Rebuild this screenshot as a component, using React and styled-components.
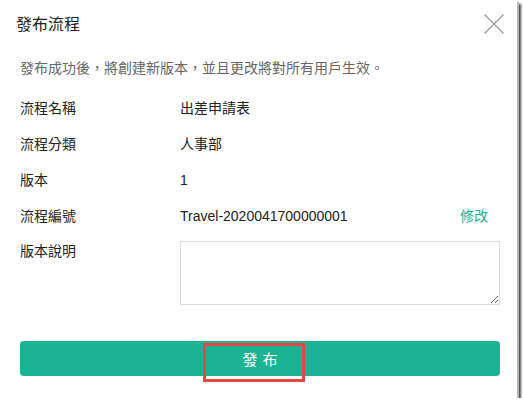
import React from "react";
import styled, { createGlobalStyle } from "styled-components";

const GlobalStyle = createGlobalStyle`
  html, body {
    margin: 0;
    padding: 0;
    background: #ffffff;
  }
  body {
    font-family: "Liberation Sans", "Noto Sans CJK TC", sans-serif;
    color: #333;
  }
`;

const Dialog = styled.div`
  width: 517px;
  height: 398px;
  box-sizing: border-box;
  background: #fff;
  box-shadow: 2px 2px 0 #b5b5b5, 4px 4px 2px #4a4a4a;
  display: flex;
  flex-direction: column;
`;

const Header = styled.div`
  height: 49px;
  display: flex;
  align-items: center;
  justify-content: space-between;
  padding: 0 13px 0 16px;
`;

const Title = styled.span`
  font-size: 16px;
  color: #222;
  line-height: 20px;
`;

const CloseButton = styled.button`
  width: 20px;
  height: 20px;
  padding: 0;
  border: none;
  background: none;
  display: flex;
  margin-top: -2px;
  cursor: pointer;
`;

const Body = styled.div`
  padding: 9px 17px 0 20px;
  display: flex;
  flex-direction: column;
`;

const Description = styled.p`
  margin: 0 0 12px;
  font-size: 14px;
  line-height: 20px;
  color: #666;
`;

const Row = styled.div`
  display: flex;
  align-items: ${(p) => (p.$top ? "flex-start" : "center")};
  height: ${(p) => (p.$top ? "auto" : "36px")};
  margin-top: ${(p) => (p.$top ? "7px" : "0")};
  font-size: 14px;
  line-height: 20px;
`;

const Label = styled.div`
  width: 160px;
  flex-shrink: 0;
  color: #222;
`;

const Value = styled.div`
  flex: 1;
  color: #222;
`;

const EditLink = styled.a`
  color: #1ab394;
  margin-right: 12px;
  cursor: pointer;
`;

const NoteInput = styled.textarea`
  width: 320px;
  height: 64px;
  box-sizing: border-box;
  border: 1px solid #dcdcdc;
  border-radius: 0;
  resize: vertical;
  font-family: inherit;
  font-size: 14px;
  outline: none;
`;

const Footer = styled.div`
  position: relative;
  margin-top: 36px;
  width: 480px;
`;

const PublishButton = styled.button`
  width: 480px;
  height: 35px;
  border: none;
  border-radius: 4px;
  background: #1ab394;
  color: #fff;
  font-family: "Liberation Sans", "Noto Sans CJK TC", sans-serif;
  font-size: 15px;
  letter-spacing: 5px;
  text-indent: 5px;
  cursor: pointer;
`;

const Highlight = styled.div`
  position: absolute;
  left: 183px;
  top: 2px;
  width: 102px;
  height: 39px;
  box-sizing: border-box;
  border: 3px solid #e8473f;
  pointer-events: none;
`;

const rows = [
  { label: "流程名稱", value: "出差申請表" },
  { label: "流程分類", value: "人事部" },
  { label: "版本", value: "1" },
  { label: "流程編號", value: "Travel-2020041700000001", editable: true },
];

export default function App() {
  return (
    <>
      <GlobalStyle />
      <Dialog>
        <Header>
          <Title>發布流程</Title>
          <CloseButton aria-label="close">
            <svg width="20" height="20" viewBox="0 0 20 20">
              <path d="M0.5 0.5 L19.5 19.5 M19.5 0.5 L0.5 19.5" stroke="#8d9aa6" strokeWidth="1.1" fill="none" />
            </svg>
          </CloseButton>
        </Header>
        <Body>
          <Description>發布成功後，將創建新版本，並且更改將對所有用戶生效。</Description>
          {rows.map((r) => (
            <Row key={r.label}>
              <Label>{r.label}</Label>
              <Value>{r.value}</Value>
              {r.editable && <EditLink>修改</EditLink>}
            </Row>
          ))}
          <Row $top>
            <Label>版本說明</Label>
            <NoteInput />
          </Row>
          <Footer>
            <PublishButton>發布</PublishButton>
            <Highlight />
          </Footer>
        </Body>
      </Dialog>
    </>
  );
}
